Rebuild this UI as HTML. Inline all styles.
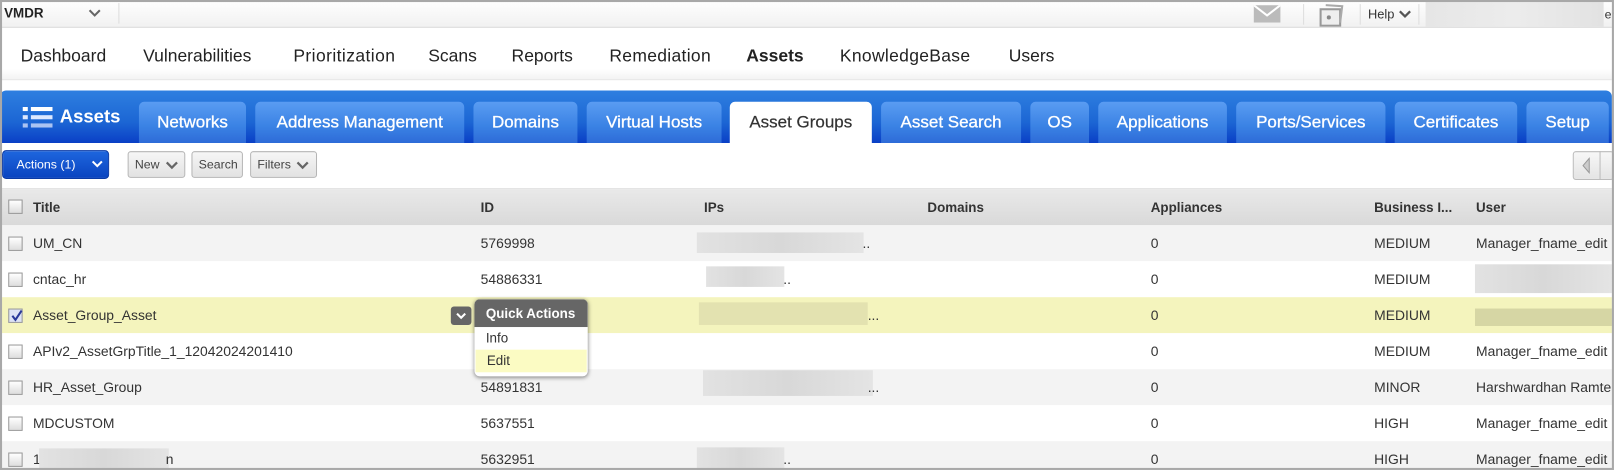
<!DOCTYPE html>
<html><head><meta charset="utf-8"><style>
*{box-sizing:border-box;margin:0;padding:0}
html,body{width:1614px;height:470px;overflow:hidden;background:#fff;font-family:"Liberation Sans",Arial,sans-serif}
#w{position:absolute;left:0;top:0;width:1568px;height:457px;transform:scale(1.0293,1.0284);transform-origin:0 0;overflow:hidden}
#bd{position:absolute;left:0;top:0;width:1568px;height:457px;border:2px solid #a8a8a8;z-index:10;pointer-events:none}
.abs{position:absolute}
.top{left:0;top:0;width:1566px;height:27px;background:linear-gradient(#fff,#f1f1f1);border-bottom:1px solid #d8d8d8}
.nav{left:0;top:28px;width:1566px;height:50px;background:linear-gradient(#fff 80%,#f3f3f3);border-bottom:1px solid #e5e5e5}
.nav span{position:absolute;top:17px;font-size:17px;color:#222}
.band{left:0;top:88px;width:1566px;height:51px;background:linear-gradient(#2e7fe0,#1c66d4 60%,#0a3fc6);border-radius:6px 6px 0 0}
.tab{position:absolute;top:11px;height:40px;background:linear-gradient(#5a9cf2,#3a82e4 60%,#2e6bd8);border-radius:5px 5px 0 0;color:#fff;font-size:16.5px;text-align:center;line-height:40px;-webkit-text-stroke:0.3px #fff}
.tab.on{background:#fff;color:#333;-webkit-text-stroke:0.2px #333}
.btn{position:absolute;top:147px;height:26px;border:1px solid #b5b5b5;border-radius:3px;background:linear-gradient(#f6f6f6,#e2e2e2);font-size:12px;color:#444;line-height:24px;padding-left:6px}
.hdr{left:0;top:183px;width:1566px;height:36px;background:linear-gradient(#e9e9e9,#d9d9d9);border-top:1px solid #ddd}
.hdr span{position:absolute;top:10px;font-size:13px;font-weight:bold;color:#333}
.row{position:absolute;left:0;width:1566px;height:35px;font-size:13.5px;color:#333}
.row span{position:absolute;top:10px;white-space:nowrap}
.cb{position:absolute;left:8px;width:14px;height:14px;border:1px solid #999;background:linear-gradient(#fff,#ddd);top:11px}
.blur{position:absolute;background:linear-gradient(90deg,#e2e2e2,#d8d8d8,#e4e4e4);height:20px;top:7px}
</style></head><body><div id="w">
<div id="bd"></div>
<div class="abs top">
 <span class="abs" style="left:4px;top:5px;font-size:13px;font-weight:bold;color:#222">VMDR</span>
 <svg class="abs" style="left:86px;top:9px" width="12" height="8"><path d="M1 1l5 5 5-5" stroke="#666" stroke-width="2" fill="none"/></svg>
 <div class="abs" style="left:115px;top:3px;width:1px;height:20px;background:#ddd"></div>
 <svg class="abs" style="left:1218px;top:5px" width="26" height="17"><rect width="26" height="17" fill="#bbb"/><path d="M0 0l13 10 13-10" stroke="#fff" stroke-width="2" fill="none"/></svg>
 <div class="abs" style="left:1266px;top:4px;width:1px;height:20px;background:#ddd"></div>
 <svg class="abs" style="left:1280px;top:2px" width="26" height="24"><rect x="3" y="7" width="19" height="16" fill="#eee" stroke="#999" stroke-width="2"/><path d="M8 3l16 1-2 16" stroke="#aaa" stroke-width="2" fill="none"/><circle cx="11" cy="15" r="2" fill="#888"/></svg>
 <div class="abs" style="left:1321px;top:4px;width:1px;height:20px;background:#ddd"></div>
 <span class="abs" style="left:1329px;top:7px;font-size:12.5px;color:#333">Help</span>
 <svg class="abs" style="left:1359px;top:10px" width="12" height="8"><path d="M1 1l5 5 5-5" stroke="#555" stroke-width="2.2" fill="none"/></svg>
 <div class="abs" style="left:1378px;top:4px;width:1px;height:20px;background:#ddd"></div>
 <div class="abs" style="left:1385px;top:2px;width:173px;height:24px;background:linear-gradient(90deg,#e6e6e6,#ececec,#e2e2e2)"></div>
 <span class="abs" style="left:1559px;top:7px;font-size:12px;color:#333">er</span>
</div>
<div class="abs nav">
 <span style="left:20px">Dashboard</span><span style="left:139px">Vulnerabilities</span><span style="left:285px;letter-spacing:0.4px">Prioritization</span><span style="left:416px">Scans</span><span style="left:497px">Reports</span><span style="left:592px;letter-spacing:0.3px">Remediation</span><span style="left:725px;font-weight:bold">Assets</span><span style="left:816px;letter-spacing:0.3px">KnowledgeBase</span><span style="left:980px">Users</span>
</div>
<div class="abs band">
 <svg class="abs" style="left:22px;top:16px" width="30" height="22"><g fill="#fff"><rect x="0" y="0" width="5" height="4"/><rect x="8" y="0" width="21" height="4"/></g><g fill="#dde8ff"><rect x="0" y="8" width="5" height="4"/><rect x="8" y="8" width="21" height="4"/></g><g fill="#aac3f2"><rect x="0" y="16" width="5" height="4"/><rect x="8" y="16" width="21" height="4"/></g></svg>
 <span class="abs" style="left:58px;top:15px;font-size:18px;font-weight:bold;color:#fff">Assets</span>
 <div class="tab" style="left:135px;width:104px">Networks</div>
 <div class="tab" style="left:248px;width:203px">Address Management</div>
 <div class="tab" style="left:460px;width:101px">Domains</div>
 <div class="tab" style="left:570px;width:131px">Virtual Hosts</div>
 <div class="tab on" style="left:709px;width:138px">Asset Groups</div>
 <div class="tab" style="left:856px;width:136px">Asset Search</div>
 <div class="tab" style="left:1001px;width:57px">OS</div>
 <div class="tab" style="left:1067px;width:125px">Applications</div>
 <div class="tab" style="left:1201px;width:145px">Ports/Services</div>
 <div class="tab" style="left:1355px;width:119px">Certificates</div>
 <div class="tab" style="left:1483px;width:80px">Setup</div>
</div>
<div class="abs" style="left:2px;top:146px;width:104px;height:28px;border-radius:4px;background:linear-gradient(#1e66de,#0a44c0);border:1px solid #0a3aa5;color:#fff;font-size:12px;line-height:26px;padding-left:13px">Actions (1)</div>
<svg class="abs" style="left:89px;top:156px" width="11" height="8"><path d="M1 1l4.5 4.5 4.5-4.5" stroke="#fff" stroke-width="2" fill="none"/></svg>
<div class="btn" style="left:124px;width:56px">New</div><svg class="abs" style="left:161px;top:157px" width="12" height="8"><path d="M1 1l5 5 5-5" stroke="#666" stroke-width="2.2" fill="none"/></svg>
<div class="btn" style="left:186px;width:50px">Search</div>
<div class="btn" style="left:243px;width:65px">Filters</div><svg class="abs" style="left:288px;top:157px" width="12" height="8"><path d="M1 1l5 5 5-5" stroke="#666" stroke-width="2.2" fill="none"/></svg>
<div class="abs" style="left:1528px;top:147px;width:40px;height:28px;border:1px solid #bbb;border-radius:3px;background:linear-gradient(#f7f7f7,#e4e4e4)"></div>
<svg class="abs" style="left:1536px;top:153px" width="10" height="16"><path d="M8 1L2 8l6 7z" fill="#ccc" stroke="#999"/></svg>
<div class="abs" style="left:1554px;top:147px;width:1px;height:28px;background:#bbb"></div>
<div class="abs hdr">
 <div class="cb" style="top:10px"></div>
 <span style="left:32px">Title</span><span style="left:467px">ID</span><span style="left:684px">IPs</span><span style="left:901px">Domains</span><span style="left:1118px">Appliances</span><span style="left:1335px">Business I...</span><span style="left:1434px">User</span>
</div>
<div class="row" style="top:219px;background:#f3f3f3"><div class="cb"></div><span style="left:32px">UM_CN</span><span style="left:467px">5769998</span><div class="blur" style="left:677px;width:162px"></div><span style="left:838px">..</span><span style="left:1118px">0</span><span style="left:1335px">MEDIUM</span><span style="left:1434px">Manager_fname_edit</span></div>
<div class="row" style="top:254px;background:#fff"><div class="cb"></div><span style="left:32px">cntac_hr</span><span style="left:467px">54886331</span><div class="blur" style="left:686px;width:76px;top:5px"></div><span style="left:761px">..</span><span style="left:1118px">0</span><span style="left:1335px">MEDIUM</span><div class="blur" style="left:1433px;width:133px;top:3px;height:28px"></div></div>
<div class="row" style="top:289px;background:#f4f4bd"><div class="cb" style="background:#dde3f5"></div><svg class="abs" style="left:10px;top:12px" width="12" height="12"><path d="M2 6l3 4 6-9" stroke="#2a3a9a" stroke-width="2" fill="none"/></svg><span style="left:32px">Asset_Group_Asset</span><div class="abs" style="left:438px;top:9px;width:20px;height:18px;background:#666;border-radius:3px"></div><svg class="abs" style="left:443px;top:15px" width="10" height="7"><path d="M1 1l4 4 4-4" stroke="#fff" stroke-width="2" fill="none"/></svg><div class="blur" style="left:679px;width:164px;top:5px;height:22px;background:#e3e2b0"></div><span style="left:843px">...</span><span style="left:1118px">0</span><span style="left:1335px">MEDIUM</span><div class="blur" style="left:1433px;width:133px;top:11px;height:17px;background:#d6d6a4"></div></div>
<div class="row" style="top:324px;background:#fff"><div class="cb"></div><span style="left:32px">APIv2_AssetGrpTitle_1_12042024201410</span><span style="left:1118px">0</span><span style="left:1335px">MEDIUM</span><span style="left:1434px">Manager_fname_edit</span></div>
<div class="row" style="top:359px;background:#f3f3f3"><div class="cb"></div><span style="left:32px">HR_Asset_Group</span><span style="left:467px">54891831</span><div class="blur" style="left:683px;width:165px;top:1px;height:25px"></div><span style="left:843px">...</span><span style="left:1118px">0</span><span style="left:1335px">MINOR</span><span style="left:1434px">Harshwardhan Ramte</span></div>
<div class="row" style="top:394px;background:#fff"><div class="cb"></div><span style="left:32px">MDCUSTOM</span><span style="left:467px">5637551</span><span style="left:1118px">0</span><span style="left:1335px">HIGH</span><span style="left:1434px">Manager_fname_edit</span></div>
<div class="row" style="top:429px;background:#f3f3f3"><div class="cb"></div><span style="left:32px">1</span><div class="blur" style="left:38px;width:126px;top:7px;height:28px"></div><span style="left:161px">n</span><span style="left:467px">5632951</span><div class="blur" style="left:677px;width:85px;top:6px;height:28px"></div><span style="left:761px">..</span><span style="left:1118px">0</span><span style="left:1335px">HIGH</span><span style="left:1434px">Manager_fname_edit</span></div>
<div class="abs" style="left:461px;top:291px;width:110px;height:75px;border-radius:5px;background:#fff;box-shadow:0 1px 4px rgba(0,0,0,.5);overflow:hidden">
 <div style="height:27px;background:#666;color:#fff;font-size:13px;font-weight:bold;line-height:27px;padding-left:11px">Quick Actions</div>
 <div style="height:22px;font-size:13px;color:#333;line-height:22px;padding-left:11px">Info</div>
 <div style="height:22px;font-size:13px;color:#333;line-height:22px;padding-left:11px;background:#fbfbc3;margin:0 1px">Edit</div>
</div>
</div></body></html>
